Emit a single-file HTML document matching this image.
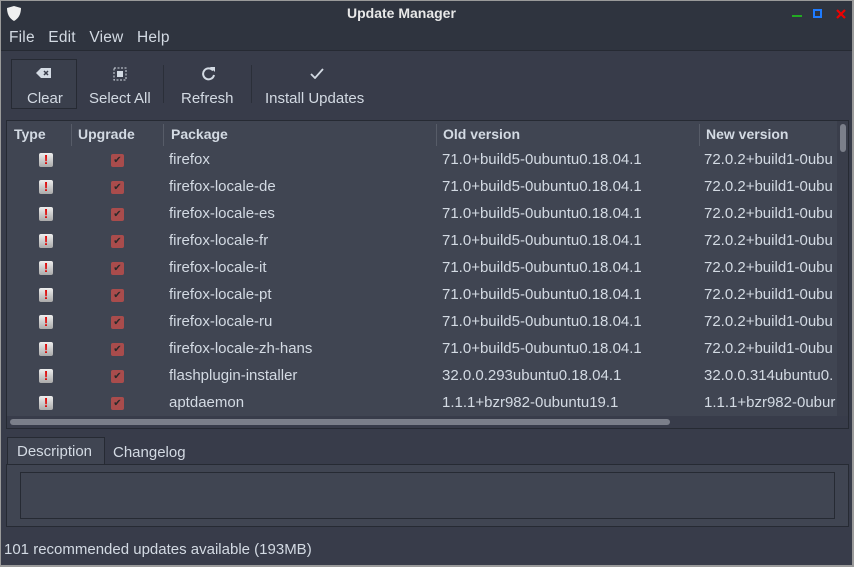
<!DOCTYPE html><html><head><style>
*{margin:0;padding:0;box-sizing:border-box}
body{width:854px;height:567px;background:#9a9a9a;font-family:"Liberation Sans",sans-serif;font-size:14px;color:#d3dae3;overflow:hidden;position:relative}
.win{position:absolute;left:1px;top:1px;width:851px;height:564px;background:#383c4a}
.abs{position:absolute}
.title{left:0;top:0;width:851px;height:50px;background:#2f343f;border-bottom:1px solid #262a33}
.row{position:absolute;left:0;width:830px;height:27px;font-size:15px}
.row span{position:absolute;top:4px;white-space:nowrap}
.ex{position:absolute;left:32px;top:6px;width:14px;height:14px;background:linear-gradient(#eee,#aaa);border-radius:2px;color:#d00;font-weight:bold;font-size:13px;line-height:14px;text-align:center}
.cb{position:absolute;left:104px;top:7px;width:13px;height:13px;background:#a94c4c;border-radius:2px;color:#2a2a2a;font-size:10px;line-height:13px;text-align:center}
</style></head><body><div class="win">
<div class="abs title"></div>
<svg class="abs" style="left:5px;top:4px" width="16" height="17" viewBox="0 0 16 17"><path d="M8 1 L15 3 Q15 12 8 16 Q1 12 1 3 Z" fill="#f0f0f0"/></svg>
<div class="abs" style="left:346px;top:4px;font-weight:bold;font-size:14px;color:#e8e8e8">Update Manager</div>
<div class="abs" style="left:791px;top:14px;width:10px;height:2px;background:#2a2"></div>
<div class="abs" style="left:812px;top:8px;width:9px;height:9px;border:2px solid #1e7bff"></div>
<svg class="abs" style="left:835px;top:8px" width="10" height="10"><path d="M1 1L9 9M9 1L1 9" stroke="#e00" stroke-width="2.2"/></svg>
<div class="abs" style="left:8px;top:28px;font-size:15.5px;letter-spacing:0.2px">File&nbsp;&nbsp; Edit&nbsp;&nbsp; View&nbsp;&nbsp; Help</div>
<div class="abs" style="left:10px;top:58px;width:66px;height:50px;border:1px solid #262a33;background:#3a3f4c"></div>
<div class="abs" style="left:162px;top:64px;width:1px;height:38px;background:#2b2f39"></div>
<div class="abs" style="left:250px;top:64px;width:1px;height:38px;background:#2b2f39"></div>
<svg class="abs" style="left:35px;top:66px" width="16" height="12"><path d="M5 1H15V11H5L0 6Z" fill="#d3dae3"/><path d="M8 4L12 8M12 4L8 8" stroke="#383c4a" stroke-width="1.5"/></svg>
<svg class="abs" style="left:112px;top:66px" width="14" height="14"><rect x="1" y="1" width="12" height="12" fill="none" stroke="#d3dae3" stroke-dasharray="2 1.5"/><rect x="4" y="4" width="6" height="6" fill="#d3dae3"/></svg>
<svg class="abs" style="left:200px;top:65px" width="15" height="15"><path d="M12 4.5A5.5 5.5 0 1 0 13 9" fill="none" stroke="#d3dae3" stroke-width="2"/><path d="M9 1H14V6Z" fill="#d3dae3"/></svg>
<svg class="abs" style="left:309px;top:67px" width="14" height="11"><path d="M1 6L5 10L13 1" fill="none" stroke="#d3dae3" stroke-width="1.8"/></svg>
<div class="abs" style="left:26px;top:89px;font-size:15px">Clear</div>
<div class="abs" style="left:88px;top:89px;font-size:15px">Select All</div>
<div class="abs" style="left:180px;top:89px;font-size:15px">Refresh</div>
<div class="abs" style="left:264px;top:89px;font-size:15px">Install Updates</div>
<div class="abs" style="left:5px;top:119px;width:843px;height:309px;border:1px solid #262a33;background:#404552;overflow:hidden">
<div class="abs" style="left:0;top:0;width:830px;height:26px;background:#404552;font-weight:bold;font-size:14px">
<span class="abs" style="left:7px;top:5px">Type</span><span class="abs" style="left:71px;top:5px">Upgrade</span><span class="abs" style="left:164px;top:5px">Package</span><span class="abs" style="left:436px;top:5px">Old version</span><span class="abs" style="left:699px;top:5px">New version</span>
<div class="abs" style="left:64px;top:3px;width:1px;height:22px;background:#575c68"></div><div class="abs" style="left:156px;top:3px;width:1px;height:22px;background:#575c68"></div><div class="abs" style="left:429px;top:3px;width:1px;height:22px;background:#575c68"></div><div class="abs" style="left:692px;top:3px;width:1px;height:22px;background:#575c68"></div>
</div>
<div id="rows"></div>
<div class="abs" style="left:830px;top:0;width:12px;height:295px;background:#3a3e4b"></div>
<div class="abs" style="left:833px;top:3px;width:6px;height:28px;background:#7b7f8a;border-radius:3px"></div>
<div class="abs" style="left:0;top:295px;width:842px;height:13px;background:#383c4a"></div>
<div class="abs" style="left:3px;top:298px;width:660px;height:6px;background:#7b7f8a;border-radius:3px"></div>
</div>
<div class="abs" style="left:6px;top:436px;width:98px;height:28px;border:1px solid #262a33;border-bottom:none;background:#404552"></div>
<div class="abs" style="left:16px;top:442px;font-size:15px">Description</div>
<div class="abs" style="left:112px;top:443px;font-size:15px">Changelog</div>
<div class="abs" style="left:5px;top:463px;width:843px;height:63px;border:1px solid #262a33;background:#404552"></div>
<div class="abs" style="left:19px;top:471px;width:815px;height:47px;border:1px solid #262a33;background:#404552"></div>
<div class="abs" style="left:3px;top:540px;font-size:15px">101 recommended updates available (193MB)</div>
</div>
<script>
var d=[["firefox","71.0+build5-0ubuntu0.18.04.1","72.0.2+build1-0ubu"],["firefox-locale-de","71.0+build5-0ubuntu0.18.04.1","72.0.2+build1-0ubu"],["firefox-locale-es","71.0+build5-0ubuntu0.18.04.1","72.0.2+build1-0ubu"],["firefox-locale-fr","71.0+build5-0ubuntu0.18.04.1","72.0.2+build1-0ubu"],["firefox-locale-it","71.0+build5-0ubuntu0.18.04.1","72.0.2+build1-0ubu"],["firefox-locale-pt","71.0+build5-0ubuntu0.18.04.1","72.0.2+build1-0ubu"],["firefox-locale-ru","71.0+build5-0ubuntu0.18.04.1","72.0.2+build1-0ubu"],["firefox-locale-zh-hans","71.0+build5-0ubuntu0.18.04.1","72.0.2+build1-0ubu"],["flashplugin-installer","32.0.0.293ubuntu0.18.04.1","32.0.0.314ubuntu0."],["aptdaemon","1.1.1+bzr982-0ubuntu19.1","1.1.1+bzr982-0ubur"]];
var h="";d.forEach(function(r,i){h+='<div class="row" style="top:'+(26+27*i)+'px"><div class="ex">!</div><div class="cb">✔</div><span style="left:162px">'+r[0]+'</span><span style="left:435px">'+r[1]+'</span><span style="left:697px">'+r[2]+'</span></div>'});
document.getElementById("rows").innerHTML=h;
</script>
</body></html>
